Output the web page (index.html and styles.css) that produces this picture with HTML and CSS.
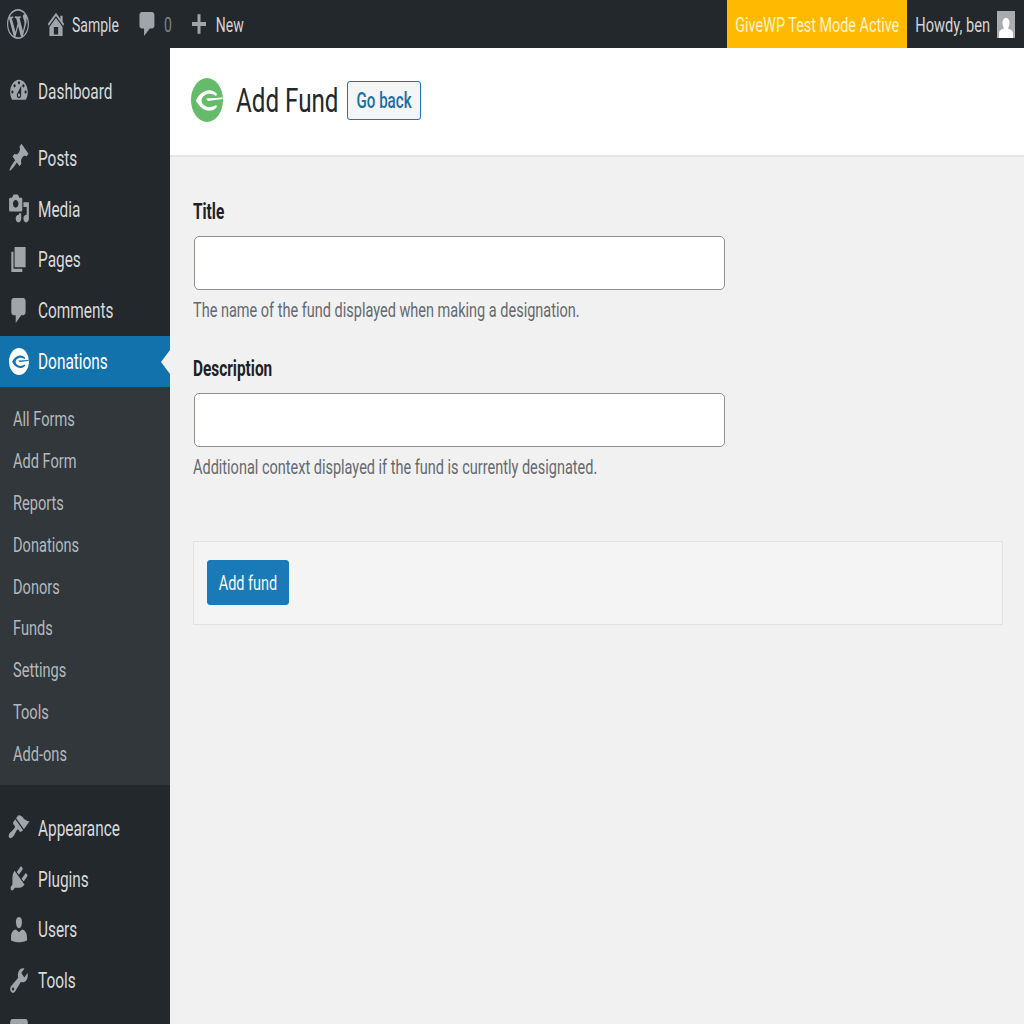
FILE: index.html
```html
<!DOCTYPE html>
<html lang="en">
<head>
    <meta charset="UTF-8">
    <title>Add Fund</title>
    <link rel="stylesheet" href="styles.css">
</head>
<body>
<!-- icon set, used by the top bar and the side menu -->
<svg class="defs" width="0" height="0">
    <symbol id="i-wp" viewBox="0 0 20 20" preserveAspectRatio="none"><path d="M20 10c0-5.51-4.49-10-10-10C4.48 0 0 4.49 0 10c0 5.52 4.48 10 10 10 5.51 0 10-4.48 10-10zM7.78 15.37L4.37 6.22c.55-.02 1.17-.08 1.17-.08.5-.06.44-1.13-.06-1.11 0 0-1.45.11-2.37.11-.18 0-.37 0-.58-.01C4.12 2.69 6.87 1.11 10 1.11c2.33 0 4.45.87 6.05 2.34-.68-.11-1.65.39-1.65 1.58 0 .74.45 1.36.9 2.1.35.61.55 1.36.55 2.46 0 1.49-1.4 5-1.4 5l-3.03-8.37c.54-.02.82-.17.82-.17.5-.05.44-1.25-.06-1.22 0 0-1.44.12-2.38.12-.87 0-2.33-.12-2.33-.12-.5-.03-.56 1.2-.06 1.22l.92.08 1.26 3.41zM17.41 10c.24-.64.74-1.87.43-4.25.7 1.29 1.05 2.71 1.05 4.25 0 3.29-1.73 6.24-4.4 7.78.97-2.59 1.94-5.2 2.92-7.78zM6.1 18.09C3.12 16.65 1.11 13.53 1.11 10c0-1.3.23-2.48.72-3.59C3.25 10.3 4.67 14.2 6.1 18.09zm4.03-6.63l2.58 6.98c-.86.29-1.76.45-2.71.45-.79 0-1.57-.11-2.29-.33.81-2.38 1.62-4.74 2.42-7.1z"/></symbol>
    <symbol id="i-home" viewBox="0 0 20 20" preserveAspectRatio="none"><path d="M16 8.5l1.53 1.53-1.06 1.06L10 4.62l-6.47 6.47-1.06-1.06L10 2.5l4 4v-2h2v4zm-6-2.46l6 5.99V18H4v-5.97zM12 17v-5H8v5h4z"/></symbol>
    <symbol id="i-comment" viewBox="0 0 20 20" preserveAspectRatio="none"><path d="M5 2h9c1.1 0 2 .9 2 2v7c0 1.1-.9 2-2 2h-2l-5 5v-5H5c-1.1 0-2-.9-2-2V4c0-1.1.9-2 2-2z"/></symbol>
    <symbol id="i-plus" viewBox="0 0 20 20" preserveAspectRatio="none"><path d="M17 8.500v3h-5.500V17h-3v-5.500H3v-3h5.500V3h3v5.500z"/></symbol>
    <symbol id="i-dash" viewBox="0 0 20 20" preserveAspectRatio="none"><path d="M3.76 16h12.48c1.1-1.37 1.76-3.11 1.76-5 0-4.42-3.58-8-8-8s-8 3.58-8 8c0 1.89.66 3.63 1.76 5zM10 4c.55 0 1 .45 1 1s-.45 1-1 1-1-.45-1-1 .45-1 1-1zM6 6c.55 0 1 .45 1 1s-.45 1-1 1-1-.45-1-1 .45-1 1-1zm8 0c.55 0 1 .45 1 1s-.45 1-1 1-1-.45-1-1 .45-1 1-1zm-5.370 5.550L12 7v6c0 1.100-.9 2-2 2s-2-.9-2-2c0-.57.24-1.080.63-1.450zM4 10c.55 0 1 .45 1 1s-.45 1-1 1-1-.45-1-1 .45-1 1-1zm12 0c.55 0 1 .45 1 1s-.45 1-1 1-1-.45-1-1 .45-1 1-1zm-5 3c0-.55-.45-1-1-1s-1 .45-1 1 .45 1 1 1 1-.45 1-1z"/></symbol>
    <symbol id="i-post" viewBox="0 0 20 20" preserveAspectRatio="none"><path d="M10.440 3.020l1.820-1.820 6.360 6.350-1.830 1.820c-1.050-.68-2.480-.57-3.410.36l-.75.75c-.92.930-1.040 2.350-.35 3.410l-1.830 1.820-2.410-2.410-2.800 2.790c-.42.42-3.380 2.710-3.800 2.290s1.860-3.390 2.280-3.810l2.790-2.790L4.100 9.360l1.830-1.820c1.050.69 2.480.57 3.400-.36l.75-.75c.93-.92 1.050-2.350.36-3.410z"/></symbol>
    <symbol id="i-media" viewBox="0 0 20 20" preserveAspectRatio="none"><path d="M13 11V4c0-.55-.45-1-1-1h-1.670L9 1H5L3.670 3H2c-.55 0-1 .45-1 1v7c0 .55.45 1 1 1h10c.55 0 1-.45 1-1zM7 4.500c1.380 0 2.500 1.120 2.500 2.500S8.380 9.500 7 9.500 4.500 8.380 4.500 7 5.620 4.500 7 4.500zM14 6h5v10.500c0 1.380-1.120 2.500-2.500 2.500S14 17.880 14 16.500s1.120-2.500 2.500-2.500c.17 0 .34.02.5.05V9h-3V6zm-4 8.050V13h2v3.500c0 1.380-1.120 2.500-2.500 2.500S7 17.880 7 16.500 8.120 14 9.500 14c.17 0 .34.02.5.05z"/></symbol>
    <symbol id="i-pages" viewBox="0 0 20 20" preserveAspectRatio="none"><path d="M6 15V2h10v13H6zm-1 1h8v2H3V5h2v11z"/></symbol>
    <symbol id="i-brush" viewBox="0 0 20 20" preserveAspectRatio="none"><path d="M14.480 11.060L7.410 3.990l1.500-1.500c.5-.56 2.300-.47 3.510.32 1.210.8 1.430 1.280 2.910 2.100 1.180.64 2.450 1.260 4.450.85zm-.71.71L6.700 4.700 4.930 6.470c-.39.39-.39 1.020 0 1.410l1.060 1.060c.39.39.39 1.030 0 1.420-.6.6-1.430 1.110-2.210 1.690-.35.26-.7.53-1.010.84C1.430 13.230 0 15.430 1.070 16.500s3.270-.36 4.610-1.700c.31-.31.58-.66.84-1.010.58-.78 1.090-1.610 1.690-2.210.39-.39 1.020-.39 1.410 0l1.060 1.060c.39.39 1.020.39 1.410 0z"/></symbol>
    <symbol id="i-plug" viewBox="0 0 20 20" preserveAspectRatio="none"><path d="M13.110 4.360L9.870 7.600 8 5.730l3.240-3.240c.35-.34 1.050-.2 1.560.32.52.51.66 1.210.31 1.550zm-8 1.770l.91-1.120 9.010 9.010-1.190.84c-.71.71-2.630 1.160-3.820 1.160H6.140L4.900 17.260c-.59.59-1.540.59-2.120 0-.59-.58-.59-1.530 0-2.120l1.240-1.240v-3.880c0-1.130.4-3.190 1.090-3.890zm7.260 3.970l3.240-3.240c.34-.35 1.040-.21 1.550.31.52.51.66 1.210.31 1.550l-3.240 3.250z"/></symbol>
    <symbol id="i-user" viewBox="0 0 20 20" preserveAspectRatio="none"><path d="M10 9.250c-2.270 0-2.730-3.440-2.730-3.440C7 4.020 7.820 2 9.970 2c2.160 0 2.980 2.020 2.710 3.810 0 0-.41 3.440-2.680 3.440zm0 2.570L12.720 10c2.390 0 4.520 2.330 4.520 4.530v2.490s-3.650 1.130-7.240 1.130c-3.650 0-7.240-1.130-7.240-1.130v-2.490c0-2.250 1.940-4.480 4.470-4.480z"/></symbol>
    <symbol id="i-tool" viewBox="0 0 20 20" preserveAspectRatio="none"><path d="M16.680 9.770c-1.340 1.340-3.300 1.670-4.950.99l-5.410 6.520c-.99.99-2.590.99-3.580 0s-.99-2.590 0-3.570l6.520-5.420c-.68-1.650-.35-3.610.99-4.950 1.280-1.280 3.120-1.620 4.720-1.060l-2.890 2.890 2.820 2.820 2.860-2.870c.53 1.580.18 3.390-1.080 4.650zM3.810 16.210c.4.39 1.040.39 1.430 0 .4-.4.4-1.040 0-1.430-.39-.4-1.030-.4-1.430 0-.39.39-.39 1.030 0 1.430z"/></symbol>
    <symbol id="i-settings" viewBox="0 0 20 20" preserveAspectRatio="none"><path d="M18 16V4c0-1.100-.9-2-2-2H4c-1.100 0-2 .9-2 2v12c0 1.100.9 2 2 2h12c1.100 0 2-.9 2-2zM8 11h1c.55 0 1 .45 1 1s-.45 1-1 1H8v1.500c0 .28-.22.5-.5.5s-.5-.22-.5-.5V13H6c-.55 0-1-.45-1-1s.45-1 1-1h1V5.500c0-.28.22-.5.5-.5s.5.22.5.5V11zm5-2h-1c-.55 0-1-.45-1-1s.45-1 1-1h1V5.500c0-.28.22-.5.5-.5s.5.22.5.5V7h1c.55 0 1 .45 1 1s-.45 1-1 1h-1v5.500c0 .28-.22.5-.5.5s-.5-.22-.5-.5V9z"/></symbol>
    <symbol id="i-give" viewBox="0 0 32 44" preserveAspectRatio="none">
        <ellipse cx="16" cy="22" rx="16" ry="22"/>
        <path class="hole" d="M5 22.500C8 16 14 11.500 20 12.500C23 13 25 14.500 26 16.500L25 18C22 16 18 15 15 16.500C12 18 10.500 20 10.500 22.500C10.500 25 12 27 15 28.500C18 30 22 29 25 27L26 28.500C25 30.500 23 32 20 32.500C14 33.500 8 29 5 22.500z"/>
        <path class="hole" d="M15 20.500L31.500 19.500L31.500 21L17 23z"/>
    </symbol>
</svg>

<div class="topbar">
    <a class="bar-item wp-item"><svg class="bar-icon wp-icon"><use href="#i-wp"/></svg></a>
    <a class="bar-item site-item"><svg class="bar-icon home-icon"><use href="#i-home"/></svg><span class="t">Sample</span></a>
    <a class="bar-item comment-item"><svg class="bar-icon comment-icon"><use href="#i-comment"/></svg><span class="t muted">0</span></a>
    <a class="bar-item new-item"><svg class="bar-icon plus-icon"><use href="#i-plus"/></svg><span class="t">New</span></a>
    <div class="bar-right">
        <a class="test-mode"><span class="t">GiveWP Test Mode Active</span></a>
        <a class="bar-item howdy"><span class="t">Howdy, ben</span><span class="avatar"><svg width="14" height="21" viewBox="0 0 14 20" preserveAspectRatio="none"><path d="M7 1c2.500 0 3.500 2 3.500 4.500S9 11 9 11c3 1 5 2 5 5v4H0v-4c0-3 2-4 5-5 0 0-1.500-3-1.500-5.500S4.500 1 7 1z"/></svg></span></a>
    </div>
</div>

<div class="wrap">
    <div class="sidebar">
        <ul class="menu first">
            <li><svg class="icon"><use href="#i-dash"/></svg><span class="t">Dashboard</span></li>
        </ul>
        <ul class="menu group">
            <li><svg class="icon"><use href="#i-post"/></svg><span class="t">Posts</span></li>
            <li><svg class="icon"><use href="#i-media"/></svg><span class="t">Media</span></li>
            <li><svg class="icon"><use href="#i-pages"/></svg><span class="t">Pages</span></li>
            <li><svg class="icon"><use href="#i-comment"/></svg><span class="t">Comments</span></li>
            <li class="active"><svg class="icon"><use href="#i-give"/></svg><span class="t">Donations</span></li>
        </ul>
        <ul class="submenu">
            <li><span class="t">All Forms</span></li>
            <li><span class="t">Add Form</span></li>
            <li><span class="t">Reports</span></li>
            <li><span class="t">Donations</span></li>
            <li><span class="t">Donors</span></li>
            <li><span class="t">Funds</span></li>
            <li><span class="t">Settings</span></li>
            <li><span class="t">Tools</span></li>
            <li><span class="t">Add-ons</span></li>
        </ul>
        <ul class="menu group lower">
            <li><svg class="icon"><use href="#i-brush"/></svg><span class="t">Appearance</span></li>
            <li><svg class="icon"><use href="#i-plug"/></svg><span class="t">Plugins</span></li>
            <li><svg class="icon"><use href="#i-user"/></svg><span class="t">Users</span></li>
            <li><svg class="icon"><use href="#i-tool"/></svg><span class="t">Tools</span></li>
            <li><svg class="icon"><use href="#i-settings"/></svg><span class="t">Settings</span></li>
        </ul>
    </div>

    <div class="main">
        <div class="page-head">
            <svg class="logo"><use href="#i-give"/></svg>
            <h1><span class="t">Add Fund</span></h1>
            <a class="back-btn"><span class="t">Go back</span></a>
        </div>
        <form class="fund-form">
            <div class="field">
                <label for="title"><span class="t">Title</span></label>
                <input type="text" id="title">
                <p class="help"><span class="t">The name of the fund displayed when making a designation.</span></p>
            </div>
            <div class="field">
                <label for="desc"><span class="t">Description</span></label>
                <input type="text" id="desc">
                <p class="help"><span class="t">Additional context displayed if the fund is currently designated.</span></p>
            </div>
            <div class="submit-box">
                <button type="button" class="add-btn"><span class="t">Add fund</span></button>
            </div>
        </form>
    </div>
</div>
</body>
</html>
```

FILE: styles.css
```css
* {box-sizing:border-box;}
html, body {height:100%;}
body {margin:0;overflow:hidden;background:#f1f1f1;font-family:Roboto, "Liberation Sans", sans-serif;font-size:15px;color:#23282d;}
ul {list-style:none;margin:0;padding:0;}
svg {fill:currentColor;display:block;}
.defs {position:absolute;}
.hole {fill:var(--hole, #fff);}

/* the shot is stretched taller than wide, so text is too */
.t {display:inline-block;transform:translateY(1px) scaleY(1.4);white-space:nowrap;}

.topbar {display:flex;align-items:center;height:48px;background:#23282d;color:#d4d6d8;font-size:14px;}
.bar-item {display:flex;align-items:center;}
.bar-icon {color:#a0a5aa;}
.wp-item {margin-left:7px;}
.wp-icon {width:22px;height:30px;}
.site-item {margin-left:16px;}
.home-icon {width:22px;height:30px;margin-right:5px;}
.comment-item {margin-left:17px;}
.comment-icon {width:23px;height:30px;margin-right:5px;}
.muted {color:#7e8489;}
.new-item {margin-left:17px;}
.plus-icon {width:20px;height:28px;margin-right:7px;}
.bar-right {display:flex;align-items:center;margin-left:auto;height:100%;}
.test-mode {display:flex;align-items:center;height:100%;padding:0 8px;background:#ffba00;color:#fff3cf;font-size:14.400px;}
.howdy {padding:0 9px 0 8px;font-size:14.650px;}
.avatar {display:flex;align-items:flex-end;justify-content:center;width:18px;height:27px;margin-left:7px;background:#a9abad;color:#fff;}

.wrap {display:flex;height:976px;}
.sidebar {flex:none;width:170px;background:#23282d;color:#d8dadb;overflow:hidden;font-size:15.400px;}
.menu li {display:flex;align-items:center;height:50.800px;padding-left:8px;}
.first {margin-top:17.600px;}
.group {margin-top:16px;}
.lower {margin-top:17.600px;}
.lower li:last-child {margin-top:1px;}
.icon {flex:none;width:22px;height:31px;margin-right:8px;color:#a0a5aa;}
.menu li.active {position:relative;height:51px;background:#1272ab;color:#fff;--hole:#1272ab;}
.active .icon {width:20px;height:27px;margin:0 9px 0 1px;color:#fff;}
.active::after {content:"";position:absolute;right:0;top:14px;border:solid transparent;border-width:12px 9px 12px 0;border-right-color:#f1f1f1;}
.submenu {padding:11px 0;background:#32373c;color:#b4b9be;font-size:14.600px;}
.submenu li {display:flex;align-items:center;height:41.800px;padding-left:13px;}

.main {flex:1;}
.page-head {display:flex;align-items:center;height:109px;padding:0 0 3px 21px;background:#fff;border-bottom:2px solid #e5e5e5;}
.logo {width:32px;height:44px;color:#66bb6a;}
h1 {margin:0 0 0 13px;font-size:24.200px;font-weight:400;color:#23282d;}
.back-btn {display:flex;align-items:center;justify-content:center;width:74px;height:39px;margin-left:8px;padding-left:1px;background:#f3f5f6;border:1px solid #1a78b4;border-radius:3px;color:#1a6fa3;font-size:15.100px;font-weight:500;}

.fund-form {padding:43px 21px 0 23px;}
.fund-form .field .t {transform:scaleY(1.4);}
.field {margin-bottom:34px;}
.field label {display:block;font-weight:700;font-size:15.400px;color:#1d2125;line-height:24px;}
.field input {display:block;width:531px;height:54px;margin:12px 0 0 1px;background:#fff;border:1px solid #8c8f94;border-radius:5px;}
.help {margin:9px 0 0;color:#646970;font-size:14.500px;line-height:24px;}
.submit-box {display:flex;align-items:flex-start;height:84px;margin-top:61px;padding:18px 0 0 13px;background:#f4f4f4;border:1px solid #e2e2e2;}
.add-btn {display:block;width:82px;height:45px;padding:0;background:#1a7ab8;border:1px solid #1a7ab8;border-radius:3px;color:#f2f7fa;font-family:inherit;font-size:14.500px;}
```
